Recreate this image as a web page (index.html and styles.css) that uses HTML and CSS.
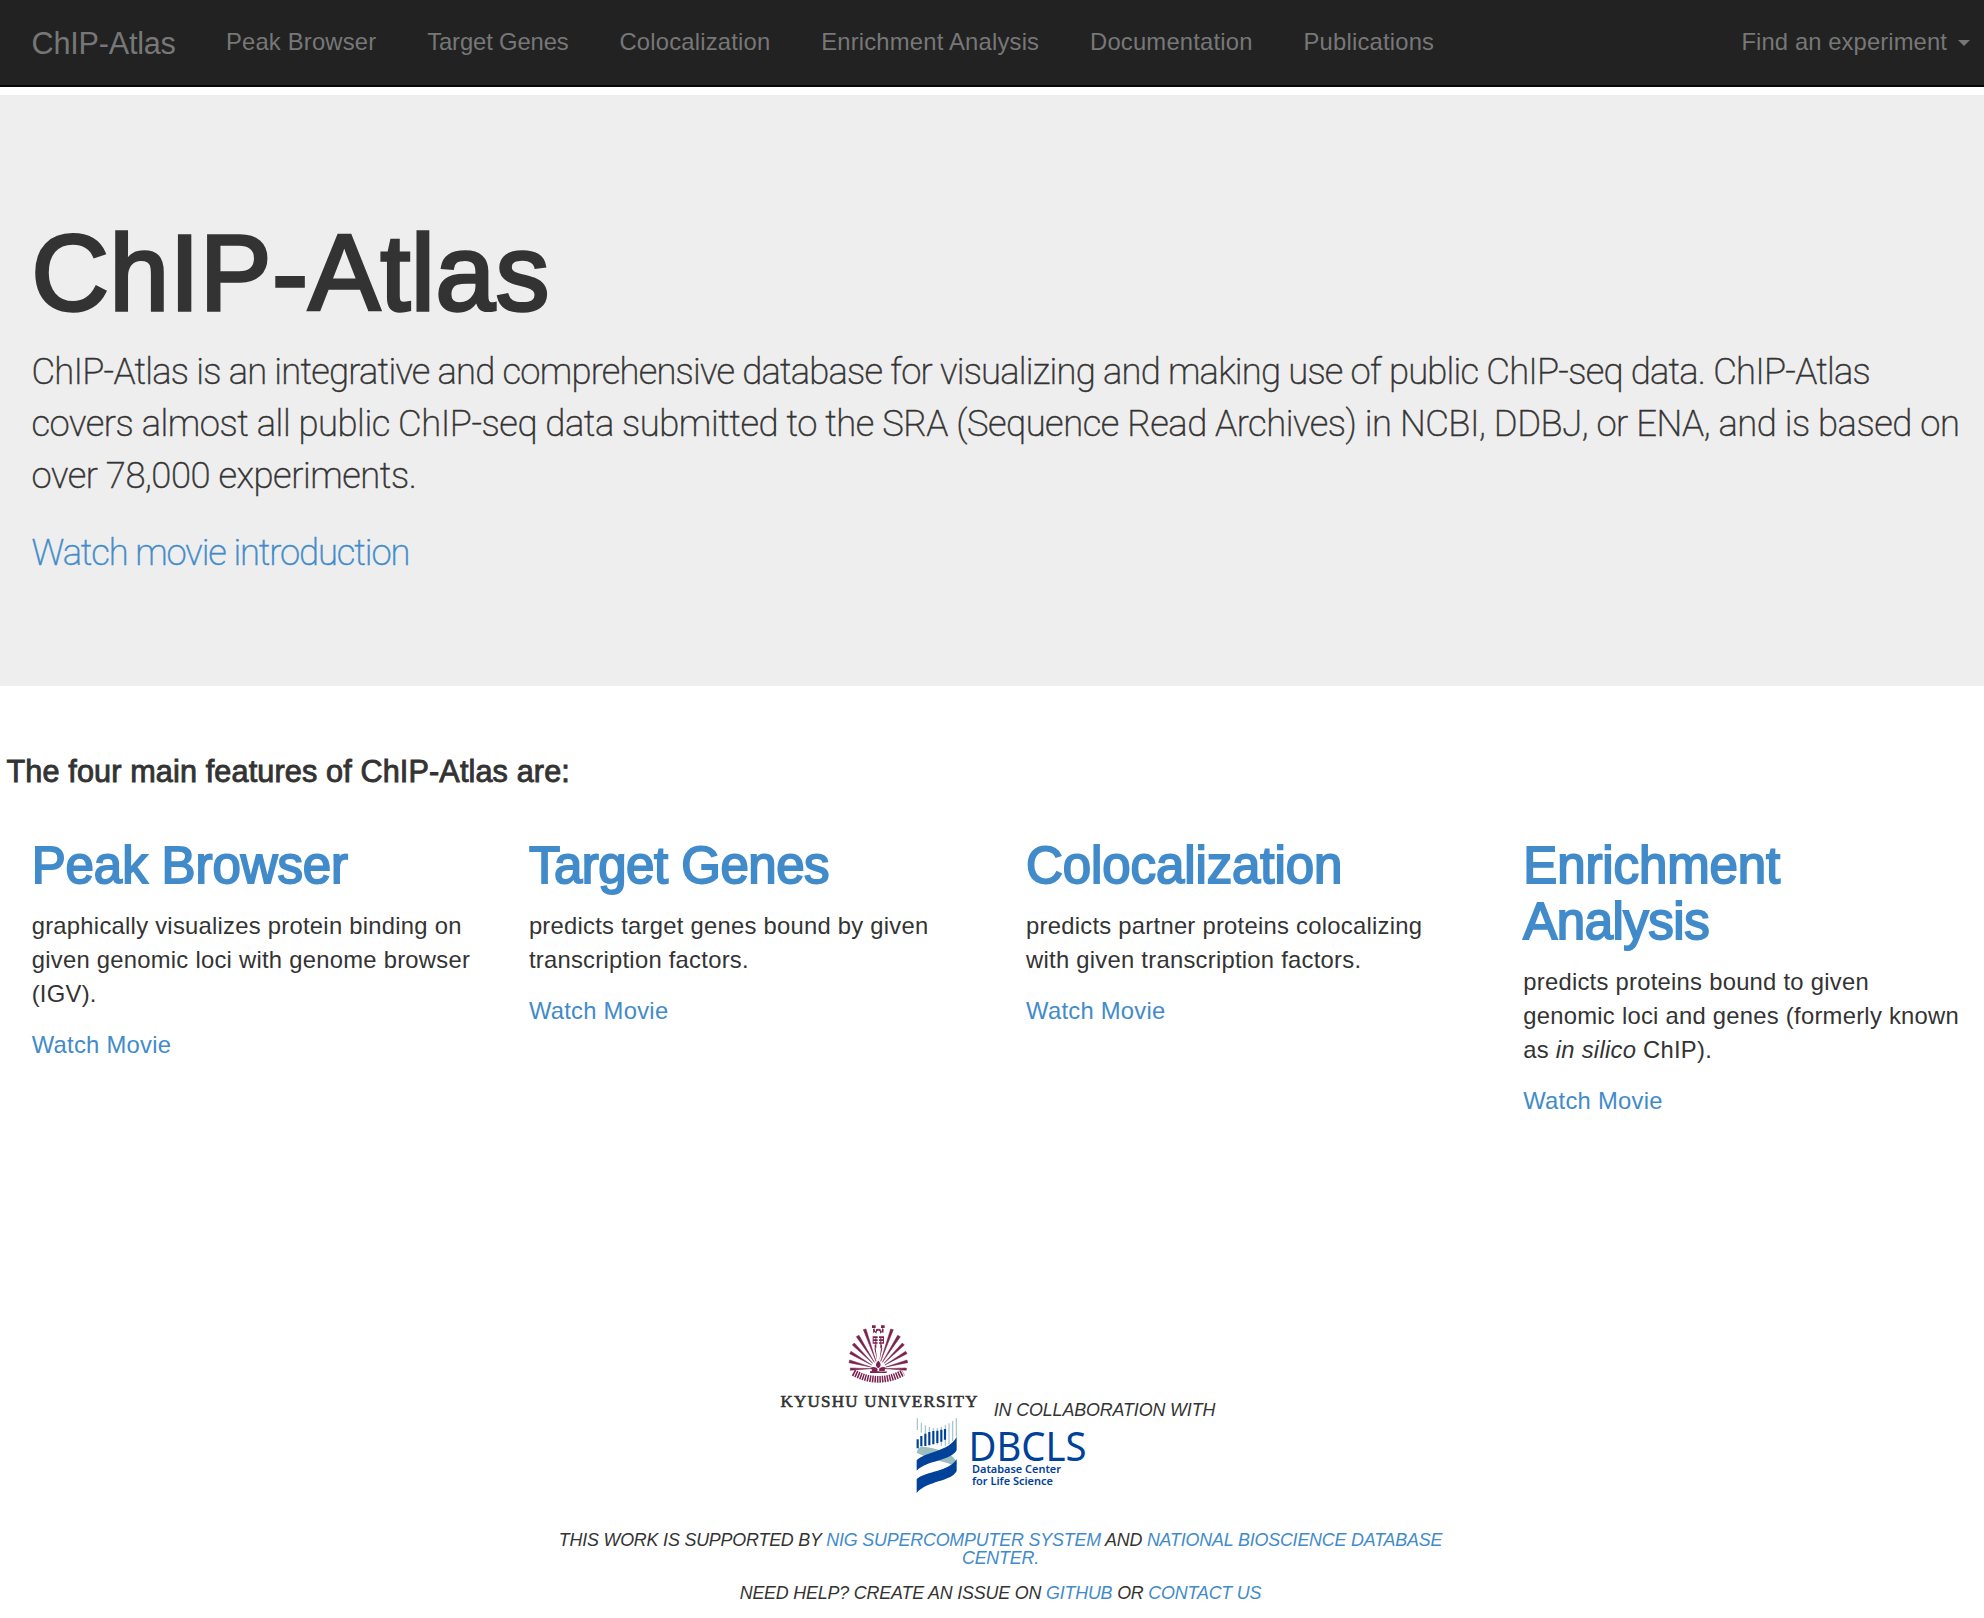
FILE: index.html
```html
<!DOCTYPE html>
<html lang="en">
<head>
<meta charset="utf-8">
<title>ChIP-Atlas</title>
<link rel="stylesheet" href="styles.css">
</head>
<body>
<nav class="navbar">
  <a class="brand">ChIP-Atlas</a>
  <a class="nav-item">Peak Browser</a>
  <a class="nav-item snug">Target Genes</a>
  <a class="nav-item">Colocalization</a>
  <a class="nav-item">Enrichment Analysis</a>
  <a class="nav-item">Documentation</a>
  <a class="nav-item">Publications</a>
  <a class="nav-item find">Find an experiment<span class="caret"></span></a>
</nav>

<header class="jumbotron">
  <h1>ChIP-Atlas</h1>
  <p><span class="l1">ChIP-Atlas is an integrative and comprehensive database for visualizing and making use of public ChIP-seq data. ChIP-Atlas</span><br><span class="l2">covers almost all public ChIP-seq data submitted to the SRA (Sequence Read Archives) in NCBI, DDBJ, or ENA, and is based on</span><br><span class="l3">over 78,000 experiments.</span></p>
  <p><a class="l4">Watch movie introduction</a></p>
</header>

<h4>The four main features of ChIP-Atlas are:</h4>
<main class="features">
  <section>
    <h2><a>Peak Browser</a></h2>
    <p>graphically visualizes protein binding on<br>given genomic loci with genome browser<br>(IGV).</p>
    <p><a>Watch Movie</a></p>
  </section>
  <section>
    <h2><a class="tight">Target Genes</a></h2>
    <p>predicts target genes bound by given<br>transcription factors.</p>
    <p><a>Watch Movie</a></p>
  </section>
  <section>
    <h2><a>Colocalization</a></h2>
    <p>predicts partner proteins colocalizing<br>with given transcription factors.</p>
    <p><a>Watch Movie</a></p>
  </section>
  <section>
    <h2><a>Enrichment<br><span class="tight">Analysis</span></a></h2>
    <p>predicts proteins bound to given<br>genomic loci and genes (formerly known<br>as <i>in silico</i> ChIP).</p>
    <p><a>Watch Movie</a></p>
  </section>
</main>

<footer>
  <div class="collab">
    <svg class="kyushu" width="204" height="90" viewBox="0 0 204 90">
      <g transform="translate(52 -5) scale(.3333)" fill="#7b2450">
        <g id="rays">
          <path stroke="#7b2450" stroke-width="1.6" d="M108 42L100 44L138 139ZM87 61L79 65L133 142ZM73 84L67 90L128 145ZM63 109L59 116L125 150ZM59 135L57 143L122 156ZM61 159V166L122 161Z"/>
          <path d="M126 31h11v8h-11zM129 42l4-2 3 10 3-8 6-1v6l-4 1-2 8-5-5-4 4zM128 64h15v5h-15zM128 73h15v5h-15zM129 82h14v4h-14zM134 89h5v9h-5zM128 64h3v22h-3zM136 64h3v36h-3zM133 100h4l5 38z"/>
        </g>
        <use href="#rays" transform="translate(290 0) scale(-1 1)"/>
        <path d="M145 137c10 8 8 18 1 22h-2c-7-4-9-14 1-22zM120 160c8-6 18-4 23 2l-1 8h-20c6-3 6-6-2-10zM170 160c-8-6-18-4-23 2l1 8h20c-6-3-6-6 2-10zM120 169h50v5h-50z"/>
        <path d="M70 173Q145 213 220 173" fill="none" stroke="#7b2450" stroke-width="20" stroke-dasharray="4.6 2.8"/>
      </g>
      <text class="kyushu-name" x="2.5" y="87" textLength="197" lengthAdjust="spacing">KYUSHU UNIVERSITY</text>
    </svg>
    <span>IN COLLABORATION WITH</span>
  </div>
  <svg class="dbcls" width="180" height="78" viewBox="0 0 180 78">
    <g transform="translate(-10 -7) scale(.3333)">
      <path d="M37 25v35M49 38v30M61 46v30M73 51v30M85 54v30M97 54v50M109 50v58M121 45v62M132 40v62M143 33v60M154 25v55" stroke="#9fc3c9" stroke-width="3.5"/>
      <path d="M35 128C40 108 50 108 66 112C105 118 145 130 155 158L152 170C130 155 85 152 35 128Z" fill="#9bbfc1"/>
      <path d="M38 88v27M49 78v31M61 71v37M73 66v40M85 63v40M97 62v37M109 59v36M120 57v32" stroke="#00419a" stroke-width="6.5"/>
      <path d="M35 151C60 124 132 126 155 80V120C140 153 65 150 35 182ZM35 208C60 183 132 186 155 147V183C140 215 65 212 35 249Z" fill="#00419a"/>
    </g>
    <text class="dbcls-name" x="53.5" y="43.7" textLength="118" lengthAdjust="spacingAndGlyphs">DBCLS</text>
    <text class="dbcls-sub" x="57" y="56" textLength="89" lengthAdjust="spacingAndGlyphs">Database Center</text>
    <text class="dbcls-sub" x="57" y="68.2" textLength="81" lengthAdjust="spacingAndGlyphs">for Life Science</text>
  </svg>
  <p>THIS WORK IS SUPPORTED BY <a>NIG SUPERCOMPUTER SYSTEM</a> AND <a>NATIONAL BIOSCIENCE DATABASE<br>CENTER.</a></p>
  <p>NEED HELP? CREATE AN ISSUE ON <a>GITHUB</a> OR <a>CONTACT US</a></p>
</footer>
</body>
</html>
```
FILE: styles.css
```css
* { box-sizing: border-box; }
body {
  margin: 0;
  height: 1618px;
  overflow: hidden;
  background: #fff;
  color: #333;
  font: 23.8px/34px "Liberation Sans", Arial, sans-serif;
  letter-spacing: .26px;
  white-space: nowrap;
}
a { color: #428bca; text-decoration: none; }
h1, h2, h4, p { margin: 0; }

.navbar {
  display: flex;
  height: 87px;
  padding-left: 6px;
  background: #222;
  border-bottom: 2px solid #080808;
}
.navbar a { color: #777; }
.brand {
  width: 194.5px;
  padding: 26px 0 0 25.5px;
  font-size: 30.6px;
  letter-spacing: -.2px;
}
.nav-item { padding: 25px 25.4px 0; letter-spacing: .2px; }
.snug { letter-spacing: -.12px; }
.find {
  display: flex;
  margin-left: auto;
  padding-right: 14px;
  letter-spacing: .1px;
}
.caret {
  margin: 15px 0 0 11px;
  width: 0;
  height: 0;
  border: 6px solid transparent;
  border-top-color: #777;
  border-bottom: 0;
}

.jumbotron {
  height: 591px;
  margin-top: 8px;
  padding: 119px 31.5px 0;
  background: #eee;
}
.jumbotron h1 {
  margin-bottom: 14px;
  font-size: 107px;
  font-weight: 400;
  line-height: 118px;
  letter-spacing: .7px;
  -webkit-text-stroke: 3.4px #333;
}
.jumbotron p {
  margin-bottom: 25px;
  font: 200 36.4px/52px Roboto, sans-serif;
  -webkit-text-stroke: .45px currentColor;
}
.l1 { letter-spacing: -.78px; }
.l2 { letter-spacing: -.465px; }
.l3 { letter-spacing: -.46px; }
.l4 { letter-spacing: -1.12px; }

h4 {
  margin: 68px 0 49px 6.5px;
  font-size: 30.6px;
  font-weight: 400;
  line-height: 34px;
  letter-spacing: .14px;
  -webkit-text-stroke: .9px #333;
}
.features {
  display: grid;
  grid-template-columns: repeat(4, 446.2px);
  column-gap: 51px;
  height: 281px;
  padding-left: 31.7px;
}
h2 {
  padding-top: 1px;
  margin-bottom: 15px;
  font-size: 51px;
  font-weight: 400;
  line-height: 56px;
  letter-spacing: -.1px;
  -webkit-text-stroke: 1.9px #428bca;
}
.tight { letter-spacing: -.5px; }
.features p { margin-bottom: 17px; }

footer {
  display: flex;
  flex-direction: column;
  align-items: center;
  margin-top: 202px;
  padding-left: 17px;
  font-size: 17.85px;
  font-style: italic;
  line-height: 18px;
  letter-spacing: -.17px;
  text-align: center;
}
.collab { display: flex; gap: 12px; height: 97px; padding-right: 8px; }
.collab span { margin-top: 81px; letter-spacing: -.1px; }
.kyushu-name {
  font: 400 17px "Liberation Serif", serif;
  fill: #333;
  stroke: #333;
  stroke-width: .6px;
  letter-spacing: 0;
}
.dbcls { margin: 0 0 35.5px 8px; }
.dbcls text { fill: #00419a; letter-spacing: 0; }
.dbcls-name { font: 400 40px "Noto Sans", sans-serif; }
.dbcls-sub { font: 600 11.5px "Noto Sans", sans-serif; }
footer p { margin-bottom: 17px; }
```
